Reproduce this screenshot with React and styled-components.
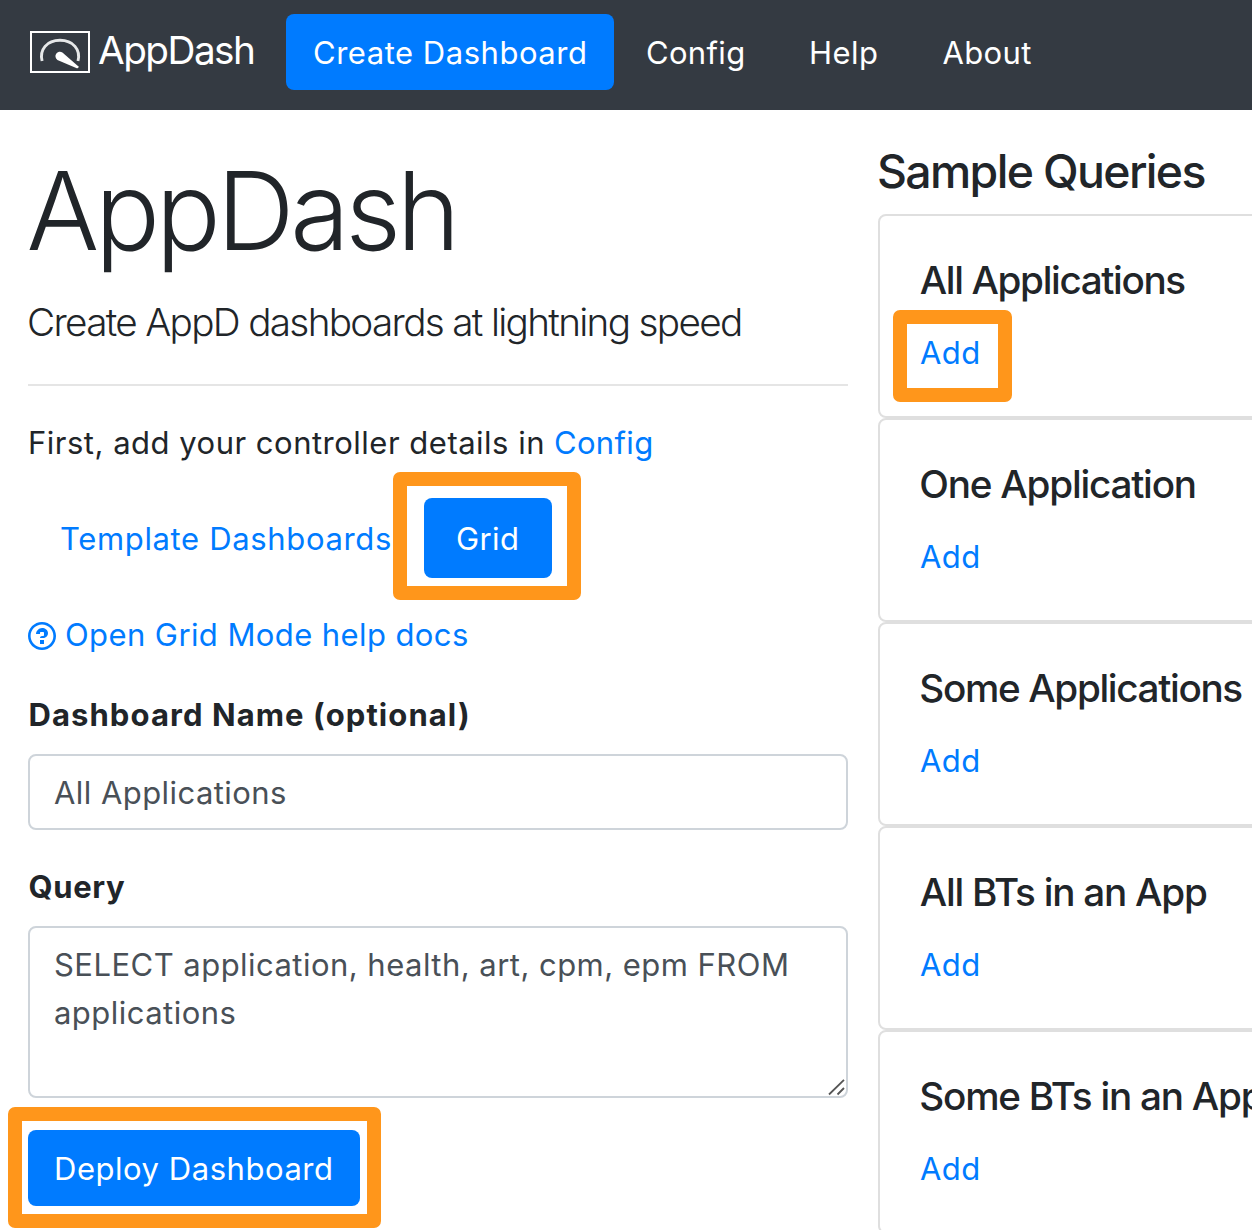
import React from 'react';
import styled, { createGlobalStyle, css } from 'styled-components';

const Global = createGlobalStyle`
  *, *::before, *::after { box-sizing: border-box; }
  html, body { margin: 0; overflow: hidden; background: #fff; }
  body {
    font-family: Inter, "Liberation Sans", sans-serif;
    font-size: 31px;
    line-height: 48px;
    color: #212529;
  }
`;

const Page = styled.div`
  height: 1230px;
  overflow: hidden;
`;

const spaced = css`
  letter-spacing: ${(p) => p.$ls ?? 0.5}px;
  white-space: nowrap;
`;

const highlight = css`
  position: relative;
  &::after {
    content: '';
    position: absolute;
    inset: ${(p) => p.$ring};
    border: 14px solid #ff961b;
    border-radius: 7px;
    pointer-events: none;
  }
`;

const Navbar = styled.nav`
  display: flex;
  align-items: flex-start;
  height: 110px;
  padding: 14px 0 0 30px;
  background: #343a42;
  color: #fff;
`;

const Brand = styled.a`
  display: flex;
  align-items: center;
  width: 256px;
  height: 76px;
`;

const LogoMark = styled.svg`
  flex: none;
  width: 60px;
  height: 42px;
  margin-right: 8px;
`;

const BrandName = styled.span`
  ${spaced}
  font-size: 38.7px;
  padding-bottom: 4px;
`;

const NavLink = styled.a`
  ${spaced}
  height: 76px;
  line-height: 77px;
  width: ${(p) => p.$width}px;
  padding-left: ${(p) => (p.$active ? 27 : 32)}px;
  border-radius: 8px;
  background: ${(p) => (p.$active ? '#007bff' : 'transparent')};
`;

const Columns = styled.main`
  display: grid;
  grid-template-columns: 820px 420px;
  column-gap: 30px;
  padding: 32px 0 0 28px;
`;

const Builder = styled.section`
  display: flex;
  flex-direction: column;
  align-items: flex-start;
`;

const Title = styled.h1`
  ${spaced}
  margin: 0.5px 0 14.5px -1.5px;
  font-size: 108px;
  line-height: 135px;
  font-weight: 300;
`;

const Lead = styled.p`
  ${spaced}
  margin: 0 0 32px -1px;
  font-size: 38.7px;
  line-height: 60px;
  font-weight: 300;
`;

const Rule = styled.hr`
  width: 100%;
  height: 2px;
  margin: 0 0 33px;
  border: 0;
  background: #e5e5e5;
`;

const Intro = styled.p`
  display: flex;
  margin: 0 0 31px;
`;

const IntroText = styled.span`
  ${spaced}
  width: 526px;
`;

const Link = styled.a`
  ${spaced}
  color: #007bff;
`;

const Tabs = styled.div`
  display: flex;
  margin-bottom: 33px;
`;

const Tab = styled.a`
  ${spaced}
  width: ${(p) => p.$width}px;
  height: 80px;
  line-height: 81px;
  padding-left: 32px;
  border-radius: 8px;
  color: ${(p) => (p.$active ? '#fff' : '#007bff')};
  background: ${(p) => (p.$active ? '#007bff' : 'transparent')};
  ${(p) => p.$ring && highlight}
`;

const HelpLink = styled.div`
  display: flex;
  align-items: center;
  gap: 9px;
  margin-bottom: 32px;
  color: #007bff;
`;

const HelpIcon = styled.svg`
  width: 28px;
  height: 32px;
  margin-top: 1px;
  fill: currentColor;
`;

const Label = styled.label`
  ${spaced}
  font-weight: 700;
  margin-bottom: 15px;
  padding-left: 0.5px;
`;

const field = css`
  display: block;
  width: 100%;
  margin: 0;
  border: 2px solid #ced4da;
  border-radius: 8px;
  background: #fff;
  color: #495057;
  font: inherit;
  letter-spacing: ${(p) => p.$ls}px;
  outline: none;
`;

const Input = styled.input`
  ${field}
  height: 76px;
  padding: 13px 24px 12px 24px;
  margin-bottom: 33px;
`;

const AreaWrap = styled.div`
  position: relative;
  width: 100%;
  margin-bottom: 32px;
`;

const TextArea = styled.textarea`
  ${field}
  height: 172px;
  padding: 13px 24px 12px 24px;
  resize: none;
  overflow: hidden;
`;

const Grip = styled.svg`
  position: absolute;
  right: 3px;
  bottom: 2px;
  width: 17px;
  height: 17px;
`;

const Button = styled.button`
  ${spaced}
  width: 332px;
  height: 76px;
  padding: 2px 0 0 26px;
  border: 0;
  border-radius: 8px;
  background: #007bff;
  color: #fff;
  font-family: inherit;
  font-size: 31px;
  line-height: 48px;
  text-align: left;
  ${highlight}
`;

const Samples = styled.aside`
  display: flex;
  flex-direction: column;
`;

const SamplesTitle = styled.h2`
  ${spaced}
  margin: 0 0 14px -1px;
  font-size: 46.4px;
  line-height: 58px;
  font-weight: 500;
`;

const Card = styled.article`
  height: 204px;
  padding: 40px;
  border: 2px solid #dfdfdf;
  border-radius: 8px;
`;

const CardTitle = styled.h3`
  ${spaced}
  margin: 0 0 25px;
  padding-left: ${(p) => p.$indent}px;
  text-indent: -0.7px;
  font-size: 38.7px;
  font-weight: 500;
`;

const AddLink = styled.a`
  ${spaced}
  display: block;
  width: 60px;
  color: #007bff;
  ${(p) => p.$ring && highlight}
`;

const samples = [
  { name: 'All Applications', ls: -1.38, indent: 0.5, ring: '-19px -31.5px -25px -27px' },
  { name: 'One Application', ls: -1.23, indent: 0 },
  { name: 'Some Applications', ls: -1.36, indent: 0 },
  { name: 'All BTs in an App', ls: -1.26, indent: 0.5 },
  { name: 'Some BTs in an App', ls: -1.26, indent: 0 },
];

function Logo() {
  return (
    <LogoMark viewBox="0 0 60 42" fill="none">
      <rect x="1" y="1" width="58" height="40" stroke="#fff" strokeWidth="2" />
      <path d="M12.100 30C9.200 18.500 17 9.300 30 9.300S50.900 18.500 48 30" stroke="#e6e8e9" strokeWidth="2.900" />
      <path d="M32.400 21.500L48.200 35.300Q49.300 37.600 46.800 37.200L27.400 28.900A4.200 4.200 0 1 1 32.400 21.500Z" fill="#fff" />
    </LogoMark>
  );
}

export default function App() {
  return (
    <Page>
      <Global />
      <Navbar>
        <Brand>
          <Logo />
          <BrandName $ls={-1.52}>AppDash</BrandName>
        </Brand>
        <NavLink $active $width={328} $ls={0.52}>Create Dashboard</NavLink>
        <NavLink $width={163} $ls={0.32}>Config</NavLink>
        <NavLink $width={133.5} $ls={0.5}>Help</NavLink>
        <NavLink $width={152} $ls={0.35}>About</NavLink>
      </Navbar>
      <Columns>
        <Builder>
          <Title $ls={-4.2}>AppDash</Title>
          <Lead $ls={-1.68}>Create AppD dashboards at lightning speed</Lead>
          <Rule />
          <Intro>
            <IntroText $ls={0.5}>First, add your controller details in</IntroText>
            <Link $ls={0.32}>Config</Link>
          </Intro>
          <Tabs>
            <Tab $width={396} $ls={0.65}>Template Dashboards</Tab>
            <Tab $active $width={128} $ls={0.4} $ring="-26.5px -29px -22px -31.5px">Grid</Tab>
          </Tabs>
          <HelpLink>
            <HelpIcon viewBox="0 0 14 16">
              <path d="M6 10h2v2H6v-2zm4-3.5C10 8.64 8 9 8 9H6c0-.55.45-1 1-1h.5c.28 0 .5-.22.5-.5v-1c0-.28-.22-.5-.5-.5h-1c-.28 0-.5.22-.5.5V7H4c0-1.500 1.500-3 3-3s3 1 3 2.500zM7 2.300c3.140 0 5.700 2.560 5.700 5.700s-2.560 5.700-5.700 5.700A5.710 5.710 0 0 1 1.300 8c0-3.140 2.560-5.700 5.700-5.700zM7 1C3.140 1 0 4.140 0 8s3.140 7 7 7 7-3.140 7-7-3.140-7-7-7z" />
            </HelpIcon>
            <Link $ls={0.41}>Open Grid Mode help docs</Link>
          </HelpLink>
          <Label $ls={1.08} htmlFor="name">Dashboard Name (optional)</Label>
          <Input id="name" $ls={0.44} defaultValue="All Applications" />
          <Label $ls={0.65} htmlFor="query">Query</Label>
          <AreaWrap>
            <TextArea id="query" $ls={0.465} defaultValue="SELECT application, health, art, cpm, epm FROM applications" />
            <Grip viewBox="0 0 17 17" stroke="#555" strokeWidth="1.800">
              <path d="M1 15.500L16 0.800M9.500 15.500L16 9" />
            </Grip>
          </AreaWrap>
          <Button $ls={0.54} $ring="-23px -21px -21.5px -20px">Deploy Dashboard</Button>
        </Builder>
        <Samples>
          <SamplesTitle $ls={-1.64}>Sample Queries</SamplesTitle>
          {samples.map((s) => (
            <Card key={s.name}>
              <CardTitle $ls={s.ls} $indent={s.indent}>{s.name}</CardTitle>
              <AddLink $ls={0.4} $ring={s.ring}>Add</AddLink>
            </Card>
          ))}
        </Samples>
      </Columns>
    </Page>
  );
}
